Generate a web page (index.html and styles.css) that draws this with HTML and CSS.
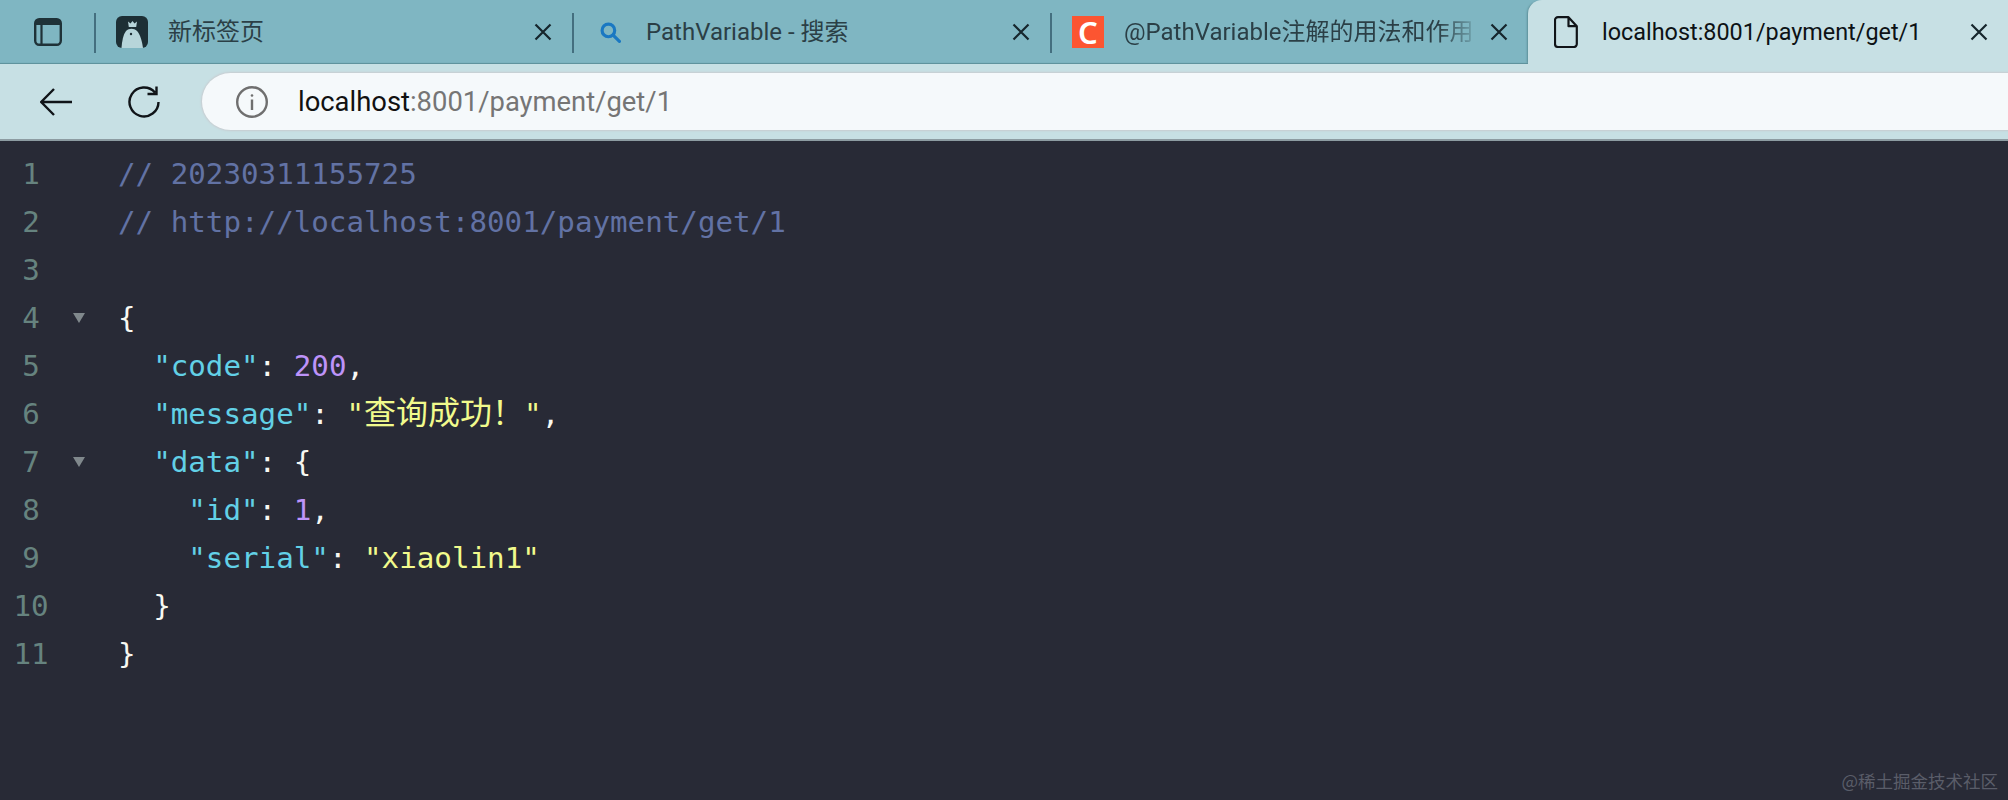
FILE: index.html
```html
<!DOCTYPE html>
<html lang="zh">
<head>
<meta charset="utf-8">
<title>localhost:8001/payment/get/1</title>
<link rel="stylesheet" href="styles.css">
</head>
<body>
<div class="tabbar">
  <div class="tab-start">
    <svg class="layout-icon" viewBox="0 0 28 28"><rect x="1.2" y="1.2" width="25.6" height="25.6" rx="4" fill="none" stroke="#1f3238" stroke-width="2.4"/><path d="M1.2 5a4 4 0 0 1 4-4h17.6a4 4 0 0 1 4 4v2H1.2z" fill="#1f3238"/><path d="M7.500 6v20" stroke="#1f3238" stroke-width="2.2"/></svg>
  </div>
  <div class="sep"></div>
  <div class="tab">
    <span class="fav"><svg class="fav-svg" viewBox="0 0 32 32"><rect width="32" height="32" rx="6" fill="#1d2f35"/><path d="M5.500 32c.5-7 1.500-13 4.500-17 3-3 8-3 11 0 3 3 5 10 6 17z" fill="#b7d5da"/><path d="M12 5.500l2.500 2 2-2.500 2 2.500 2.500-2-.8 5.500h-7.400z" fill="#b7d5da"/><circle cx="15" cy="18" r="1.200" fill="#1d2f35"/></svg></span>
    <span class="title">新标签页</span>
    <svg class="close" viewBox="0 0 20 20"><path d="M2.500 2.500l15 15M17.500 2.500l-15 15"/></svg>
  </div>
  <div class="sep"></div>
  <div class="tab">
    <span class="fav"><svg class="search-svg" viewBox="0 0 20 20"><circle cx="8" cy="8" r="6" fill="none" stroke="#1a78c2" stroke-width="3"/><path d="M12.500 12.500l6 6" stroke="#1a78c2" stroke-width="3" stroke-linecap="round"/></svg></span>
    <span class="title">PathVariable - 搜索</span>
    <svg class="close" viewBox="0 0 20 20"><path d="M2.500 2.500l15 15M17.500 2.500l-15 15"/></svg>
  </div>
  <div class="sep"></div>
  <div class="tab">
    <span class="fav fav-c">C</span>
    <span class="title title-fade">@PathVariable注解的用法和作用</span>
    <svg class="close" viewBox="0 0 20 20"><path d="M2.500 2.500l15 15M17.500 2.500l-15 15"/></svg>
  </div>
  <div class="tab tab-active">
    <span class="fav"><svg class="doc-svg" viewBox="0 0 24 32"><path d="M4 1.200h10.500l8.300 9V28a3 3 0 0 1-3 3H4a3 3 0 0 1-3-3V4.200a3 3 0 0 1 3-3zM14.500 1.200v9h8.300" fill="none" stroke="#101418" stroke-width="2.200" stroke-linejoin="round"/></svg></span>
    <span class="title">localhost:8001/payment/get/1</span>
    <svg class="close" viewBox="0 0 20 20"><path d="M2.500 2.500l15 15M17.500 2.500l-15 15"/></svg>
  </div>
</div>
<div class="toolbar">
  <svg class="tool back" viewBox="0 0 32 28"><path d="M14 1L1.200 14 14 27M1.200 14H32" /></svg>
  <svg class="tool reload" viewBox="0 0 32 32"><path d="M27 6.500A14.500 14.500 0 1 0 30.500 16M28.500 0.500v7.500h-9"/></svg>
  <div class="omnibox">
    <svg class="info" viewBox="0 0 32 32"><circle cx="16" cy="16" r="14.800"/><path d="M16 13.500V24"/><circle class="dot" cx="16" cy="9.500" r="1.300"/></svg>
    <span class="url"><span class="host">localhost</span>:8001/payment/get/1</span>
  </div>
</div>
<main class="viewer">
  <div class="row"><span class="ln">1</span><span class="fold"></span><code class="c"><span class="cm">// 20230311155725</span></code></div>
  <div class="row"><span class="ln">2</span><span class="fold"></span><code class="c"><span class="cm">// http://localhost:8001/payment/get/1</span></code></div>
  <div class="row"><span class="ln">3</span><span class="fold"></span><code class="c"></code></div>
  <div class="row"><span class="ln">4</span><span class="fold"><i class="tri"></i></span><code class="c">{</code></div>
  <div class="row"><span class="ln">5</span><span class="fold"></span><code class="c">  <span class="k">"code"</span>: <span class="n">200</span>,</code></div>
  <div class="row"><span class="ln">6</span><span class="fold"></span><code class="c">  <span class="k">"message"</span>: <span class="s">"<span class="cjk">查询成功！</span>"</span>,</code></div>
  <div class="row"><span class="ln">7</span><span class="fold"><i class="tri"></i></span><code class="c">  <span class="k">"data"</span>: {</code></div>
  <div class="row"><span class="ln">8</span><span class="fold"></span><code class="c">    <span class="k">"id"</span>: <span class="n">1</span>,</code></div>
  <div class="row"><span class="ln">9</span><span class="fold"></span><code class="c">    <span class="k">"serial"</span>: <span class="s">"xiaolin1"</span></code></div>
  <div class="row"><span class="ln">10</span><span class="fold"></span><code class="c">  }</code></div>
  <div class="row"><span class="ln">11</span><span class="fold"></span><code class="c">}</code></div>
  <div class="watermark">@稀土掘金技术社区</div>
</main>
</body>
</html>
```
FILE: styles.css
```css
* { box-sizing: border-box; }
html, body { margin: 0; height: 100%; overflow: hidden; }
body {
  width: 2008px;
  height: 800px;
  display: flex;
  flex-direction: column;
  background: #282a36;
  font-family: Roboto, "Noto Sans CJK SC", sans-serif;
}
.tabbar {
  height: 64px;
  display: flex;
  align-items: stretch;
  background: #7fb6c2;
  box-shadow: inset 0 -2px 1px -1px #5d8f99;
}
.tab-start {
  width: 94px;
  display: flex;
  align-items: center;
  padding-left: 34px;
}
.layout-icon { width: 28px; height: 28px; }
.sep {
  width: 2px;
  height: 40px;
  margin-top: 13px;
  background: #446f7f;
}
.tab {
  width: 476px;
  display: flex;
  align-items: center;
  padding: 0 19px 0 20px;
  color: #2b3f46;
}
.fav {
  width: 32px;
  height: 32px;
  flex: none;
  margin-right: 20px;
  display: flex;
  align-items: center;
  justify-content: center;
}
.fav-svg { width: 32px; height: 32px; }
.search-svg { width: 21px; height: 21px; }
.doc-svg { width: 24px; height: 32px; }
.fav-c {
  background: #fc5531;
  color: #fff;
  font-size: 31px;
  font-weight: 600;
  line-height: 32px;
  font-family: "Noto Sans", sans-serif;
}
.title {
  flex: 1;
  min-width: 0;
  white-space: nowrap;
  overflow: hidden;
  font-size: 24px;
  line-height: 32px;
}
.title-fade {
  -webkit-mask-image: linear-gradient(to right, #000 88%, transparent 100%);
  mask-image: linear-gradient(to right, #000 88%, transparent 100%);
}
.close {
  width: 20px;
  height: 20px;
  flex: none;
  margin-left: 8px;
  fill: none;
  stroke: #16262c;
  stroke-width: 2.2;
}
.tab-active {
  flex: 1;
  width: auto;
  padding: 0 19px 0 22px;
  background: #c7e0e4;
  border-radius: 14px 0 0 0;
  color: #0d1215;
  box-shadow: -2px 0 2px -1px #5d8f99;
}
.tab-active .title { font-size: 23.400px; }
.toolbar {
  height: 77px;
  display: flex;
  align-items: center;
  padding-left: 40px;
  background: #c7e0e4;
  border-bottom: 2px solid #8d9ca2;
  overflow: hidden;
}
.tool {
  flex: none;
  fill: none;
  stroke: #101418;
  stroke-width: 2.400;
}
.back { width: 32px; height: 28px; margin-right: 56px; }
.reload { width: 32px; height: 32px; margin-right: 42px; }
.omnibox {
  flex: none;
  width: 1860px;
  height: 57px;
  display: flex;
  align-items: center;
  padding-left: 34px;
  background: #f5f9fb;
  border-radius: 29px;
  box-shadow: 0 0 2px 1px #c8ccd0;
}
.info {
  width: 32px;
  height: 32px;
  margin-right: 30px;
  fill: none;
  stroke: #6f6f6f;
  stroke-width: 2.400;
}
.info .dot { fill: #6f6f6f; stroke: none; }
.url {
  font-size: 27.400px;
  color: #757575;
  white-space: nowrap;
}
.host { color: #111; }
.viewer {
  flex: 1;
  position: relative;
  padding-top: 9px;
  background: #282a36;
}
.row {
  height: 48px;
  display: flex;
  align-items: center;
  line-height: 48px;
  font-family: "DejaVu Sans Mono", "Noto Sans CJK SC", monospace;
  font-size: 29.200px;
}
.ln {
  width: 62px;
  flex: none;
  text-align: center;
  color: #66837f;
}
.fold {
  width: 56px;
  flex: none;
  padding-left: 11px;
  display: flex;
  align-items: center;
}
.tri {
  width: 0;
  height: 0;
  border-left: 6px solid transparent;
  border-right: 6px solid transparent;
  border-top: 10px solid #80888c;
}
.c {
  font: inherit;
  white-space: pre;
  color: #f8f8f2;
}
.cm { color: #6272a4; }
.k { color: #62d0e6; }
.n { color: #bd93f9; }
.s { color: #f1fa8c; }
.cjk {
  font-family: "Noto Sans CJK SC", sans-serif;
  font-size: 32px;
  line-height: 1;
}
.watermark {
  position: absolute;
  right: 10px;
  bottom: 9px;
  font-size: 17.500px;
  line-height: 20px;
  color: #5a5d69;
  font-family: "Noto Sans CJK SC", sans-serif;
}
```
